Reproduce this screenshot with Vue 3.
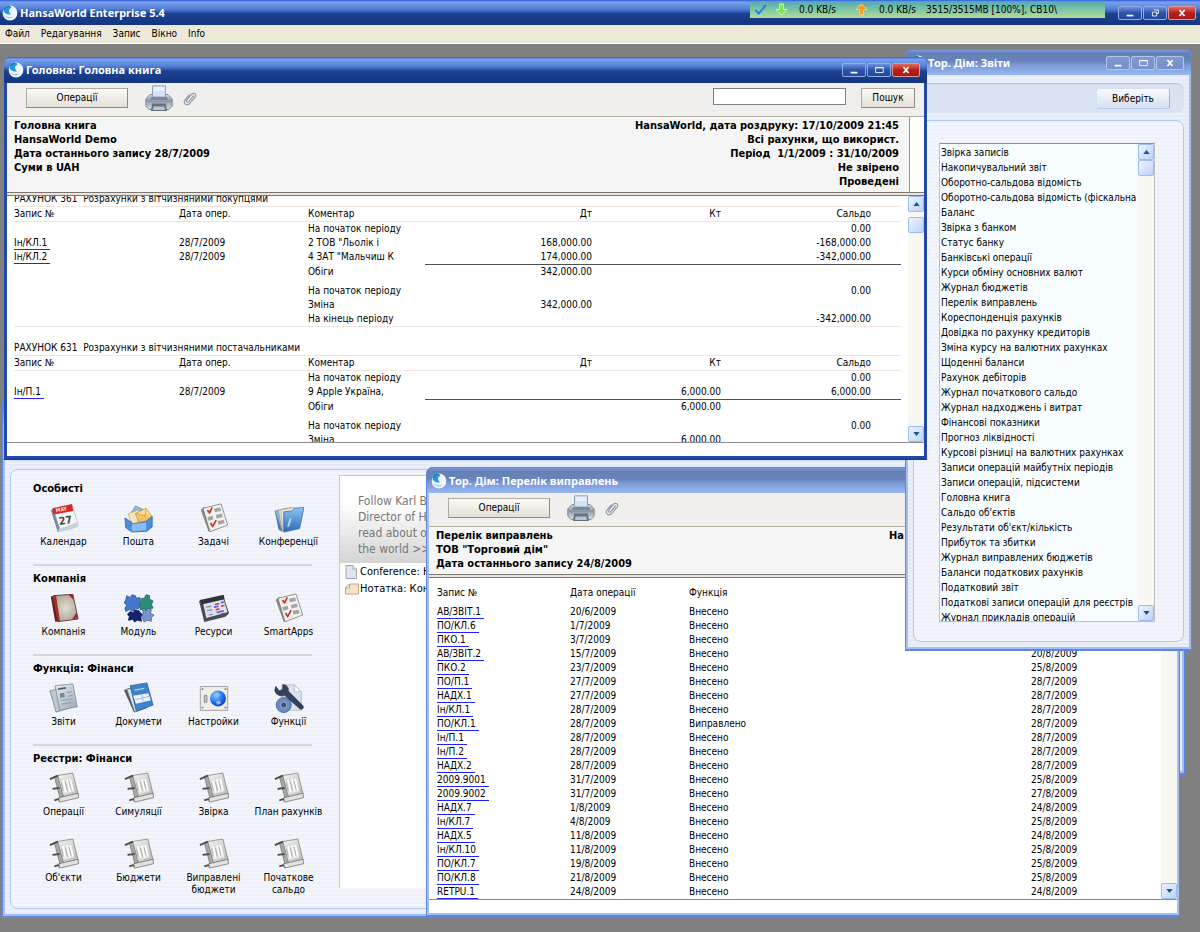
<template>
  <div class="app">
    <svg class="sprite" width="0" height="0" aria-hidden="true">
      <defs>
        <linearGradient id="g-blue" x1="0" y1="0" x2="0" y2="1">
          <stop offset="0" stop-color="#8fc4f0" />
          <stop offset="1" stop-color="#2c68b8" />
        </linearGradient>
        <linearGradient id="g-steel" x1="0" y1="0" x2="1" y2="1">
          <stop offset="0" stop-color="#e6ecf1" />
          <stop offset="1" stop-color="#9aa8b5" />
        </linearGradient>
        <linearGradient id="g-grey" x1="0" y1="0" x2="1" y2="1">
          <stop offset="0" stop-color="#f6f6f4" />
          <stop offset="1" stop-color="#b4b4b2" />
        </linearGradient>
        <linearGradient id="g-gold" x1="0" y1="0" x2="0" y2="1">
          <stop offset="0" stop-color="#fff0b0" />
          <stop offset="1" stop-color="#e8a832" />
        </linearGradient>
        <linearGradient id="g-printer" x1="0" y1="0" x2="0" y2="1">
          <stop offset="0" stop-color="#d4dde6" />
          <stop offset="0.45" stop-color="#8995a1" />
          <stop offset="0.6" stop-color="#a5b3bf" />
          <stop offset="1" stop-color="#d6e2ea" />
        </linearGradient>
        <radialGradient id="g-globe" cx="0.35" cy="0.3" r="0.8">
          <stop offset="0" stop-color="#8cc8ff" />
          <stop offset="0.6" stop-color="#1e6cf0" />
          <stop offset="1" stop-color="#0a2ea0" />
        </radialGradient>
        <radialGradient id="g-paper" cx="0.5" cy="0.5" r="0.7">
          <stop offset="0" stop-color="#e4dfd2" />
          <stop offset="1" stop-color="#9c9484" />
        </radialGradient>
      </defs>

      <symbol id="logo" viewBox="0 0 16 16">
        <circle cx="8" cy="8" r="7.4" fill="#eef6fc" />
        <path d="M1.500 6C2 2.500 5 .8 8 1c1.500.2 1.500 1.500.5 2.300C6.500 4.500 6.500 7 9 9.500 6 9.500 3 9 1.500 6z" fill="#1e9ad8" />
        <path d="M2.500 10c2 2.300 6 3 9 1.500-1.800 2.600-7 3-9-1.500z" fill="#8cc0e4" />
        <path d="M2.200 4.500C3 2.500 5 1.200 7 1.200" stroke="#0d5fae" fill="none" />
      </symbol>

      <symbol id="printer" viewBox="0 0 28 27">
        <path d="M5 9.500h18l4.200 4.500v7l-3.200 3.500H4L.8 21v-7z" fill="url(#g-printer)" stroke="#7f8c98" />
        <path d="M7.500 .8h13V12h-13z" fill="#d3e2f8" stroke="#8ea3be" />
        <path d="M6 12h16l1 3H5z" fill="#7c8996" />
        <path d="M9 2h10v4H9z" fill="#e9f1fc" />
        <path d="M7 18.500h14l1 7.500H6z" fill="#66737e" />
        <path d="M8.500 21.500h11L20 25H8z" fill="#b8c6d1" />
      </symbol>

      <symbol id="clip" viewBox="0 0 14 16">
        <path d="M10.500 5 5.700 10.600c-1.300 1.400-3-.2-1.900-1.600L8.400 3.400c2.200-2.400 5.600 0 3.700 2.700L6.800 12.400C4 15.400-.3 12.500 1.800 9.300L6.200 4" fill="none" stroke="#8f9aa7" stroke-width="1.200" stroke-linecap="round" />
      </symbol>

      <symbol id="mail" viewBox="0 0 34 34">
        <path d="M8 11 13 3l12 6-4 9z" fill="#8dbbe0" stroke="#5a8db8" stroke-width=".7" />
        <path d="M5 12 16 8l8 11-16 5z" fill="#f4e5b8" stroke="#b79a52" stroke-width=".7" />
        <path d="M13 12 25 6l7 10-14 9z" fill="url(#g-gold)" stroke="#b88420" stroke-width=".7" />
        <path d="M13 12 24 15l1-9" fill="none" stroke="#b88420" stroke-width=".7" />
        <path d="M1 17l8 5v2l16-3 7-6v12l-6 5-17 1-7-5z" fill="#4e8ddb" stroke="#2a5fae" stroke-width=".8" />
        <path d="M9 24l16-2v9l-16 1z" fill="#8cbcf4" />
      </symbol>

      <symbol id="tasks" viewBox="0 0 34 34">
        <path d="M2 8 6 4l8 26-3 3z" fill="#8a8a8a" />
        <path d="M4.500 6 25 1l7.500 24-20 7.500z" fill="#f2f2f0" stroke="#6d6d6d" stroke-width=".8" />
        <path d="M17 6.500l7-1.500 1 4-7 1.500zM19 13.500l7-1.500 1 4-7 1.500zM21 20.500l7-1.500 1 4-7 1.500zM9.500 16l6-1.500 1 4-6 1.500z" fill="#a4a4a4" />
        <path d="M8 8.500l6-1.500 1 4-6 1.500zM12 23l6-1.500 1 4-6 1.500z" fill="#dcdcdc" />
        <path d="M9.500 8l2.500 3 3-6M13 22.500l2.500 4 4-7" fill="none" stroke="#c8302c" stroke-width="1.800" />
      </symbol>

      <symbol id="folder" viewBox="0 0 34 34">
        <path d="M1 9 15 6l4 20-11 5z" fill="#8fb4d4" stroke="#4f7fae" stroke-width=".7" />
        <path d="M5 8l15-3 3 20-14 6z" fill="#d7e6c8" stroke="#8a9b94" stroke-width=".7" />
        <path d="M8 8l15-3 3 20-16 6z" fill="#f6eedd" stroke="#a49a80" stroke-width=".7" />
        <path d="M11 10l9-1 3-3 11-1-5 24-18 4z" fill="url(#g-blue)" stroke="#2d619c" stroke-width=".8" />
        <path d="M1 9l9 24-5-3z" fill="#4d7fb4" />
        <path d="M19 17l-3 10" stroke="#b8d8f4" stroke-width="2" />
      </symbol>

      <symbol id="book" viewBox="0 0 34 34">
        <path d="M2 4l5-1 5 29-5 .5z" fill="#6b1f1d" />
        <path d="M5 3l22-1.500 6 28-23 3z" fill="url(#g-paper)" stroke="#54352c" />
        <path d="M5 3h3l4.500 29-2.500.5z" fill="#a62c2c" />
        <path d="M22 2l5-.5 1.500 7zM33 29l-7 1 5-8z" fill="#a62c2c" />
      </symbol>

      <symbol id="puzzle" viewBox="0 0 34 34">
        <path d="M3 3l4 2 2-3 4 1 1 3 4-1 1 4-2 3 2 3-3 3-4-1-1 3-5-1-4 2-1-4 2-3-3-3 2-3z" fill="#4676cc" stroke="#234a92" stroke-width=".8" />
        <path d="M20 6l3 0 2-4 4 1v4l4 2-2 4 2 4-5 1-1 3-4-3-5 1 1-4-2-3 3-2z" fill="#2b8f74" stroke="#145a4c" stroke-width=".8" />
        <path d="M7 21l4 1 1-3 5 1 2 3 2 1-2 4 1 4-5-1-3 2-2-3-5 1 1-4-2-3z" fill="#10246e" stroke="#0a1648" stroke-width=".8" />
        <path d="M21 19l4 1 2-3 4 2-1 4 4 2-3 3v4l-5-1-3 2-2-4-2-2 3-3z" fill="#7894cc" stroke="#39588f" stroke-width=".8" />
      </symbol>

      <symbol id="planner" viewBox="0 0 34 34">
        <path d="M0 9 27 3l7 20-4 4-24 6z" fill="#4a4d58" />
        <path d="M4 11 28 6l5 16-25 7z" fill="#dfdfea" stroke="#333846" stroke-width=".8" />
        <path d="M1 8 28 2l1 5L3 13z" fill="#2e3340" />
        <path d="M8 16l6-1M9 20l6-1M11 25l5-1" stroke="#8893b0" stroke-width="1.500" />
        <path d="M18 13l5-1M25 15l4-1M19 19l4-1M25 24l3-1" stroke="#e03448" stroke-width="1.800" />
        <path d="M17 16l5-1M20 22l8-2M25 11l3-1" stroke="#3b60d8" stroke-width="1.800" />
      </symbol>

      <symbol id="report" viewBox="0 0 34 34">
        <path d="M1 9l16-5 7 24-16 5z" fill="#bcc8d1" stroke="#6b7985" stroke-width=".8" />
        <path d="M7 3l20-2 5 26-20 4z" fill="url(#g-steel)" stroke="#74828e" stroke-width=".8" />
        <path d="M10 7l9-1.500" stroke="#4d5a66" stroke-width="1.800" />
        <path d="M12 12l5-1 1 5-5 1z" fill="#788894" />
        <path d="M13 20l13-2M14 24l13-2M20 11l6-1M21 15l6-1" stroke="#8a98a4" />
      </symbol>

      <symbol id="documents" viewBox="0 0 34 34">
        <path d="M0 8 14 3l10 26-13 4z" fill="#4a5862" />
        <path d="M3 7 20 4l6 24-14 5z" fill="#d5dee6" stroke="#5a6772" stroke-width=".8" />
        <path d="M7 3l19-3 7 25-19 7z" fill="#3f84ca" stroke="#24548c" stroke-width=".8" />
        <path d="M10.500 14.500l17-3 3 8-17 4z" fill="#eef4fa" />
        <path d="M12 19l17-4M20 13l2 8" stroke="#9cb4ce" />
        <path d="M12 8l11-2" stroke="#b0d6f6" stroke-width="1.500" />
      </symbol>

      <symbol id="settings" viewBox="0 0 34 34">
        <path d="M1.500 4h31v27h-31z" fill="#eeeeea" stroke="#9a9a98" />
        <path d="M3 6h2v2H3zM29 6h2v2h-2zM3 27h2v2H3zM29 27h2v2h-2z" fill="#888" />
        <path d="M6 14h3v8H6z" fill="#c2c2c0" stroke="#777" stroke-width=".8" />
        <circle cx="21.500" cy="17.500" r="9" fill="url(#g-globe)" />
        <path d="M18 12c3-2 5 0 6 2l-4 3-3-2zM19 21l5-1 1 3-4 2z" fill="#7cc2fa" />
      </symbol>

      <symbol id="tools" viewBox="0 0 34 34">
        <path d="M9 2h14l8 8v21H9z" fill="#dce2ee" stroke="#b4bdce" />
        <path d="M23 2v8h8z" fill="#f6f8fc" stroke="#b4bdce" />
        <circle cx="11" cy="25" r="8.500" fill="#6b89be" stroke="#4a689c" />
        <circle cx="11" cy="25" r="3.500" fill="#3b4f78" stroke="#a8bbdc" />
        <path d="M2 4l4 5 4-2V2c4 0 7 3 6 7l16 16c3 3 0 6-3 4L12 14C6 16 1 12 1 8z" fill="#33445f" stroke="#1c2940" stroke-width=".8" />
      </symbol>

      <symbol id="register" viewBox="0 0 34 34">
        <path d="M9 3 27 0l6 24-17 5z" fill="url(#g-grey)" stroke="#777" stroke-width=".8" />
        <path d="M6 4l4-1 7 26-6 3 1-5z" fill="#a8a8a6" stroke="#666" stroke-width=".7" />
        <path d="M1 7l9-4M4 18l8-1M6 31l10-3" stroke="#4c4c4c" stroke-width="2" fill="none" />
        <path d="M11 28l22-5 .5 5L12 33z" fill="#e2e2e0" stroke="#666" stroke-width=".8" />
        <path d="M12 7l13-2 4 16-13 3z" fill="#dededc" />
        <path d="M16 8l3 14M20.500 7l3 14M24 7l3 13" stroke="#fff" stroke-width="2" />
        <path d="M14 11l2 9M18.500 10l2.500 10M22.500 9l2.500 10" stroke="#a0a09e" stroke-width=".9" />
      </symbol>
    </svg>

    <header class="titlebar titlebar--main">
      <svg class="titlebar__logo"><use href="#logo" /></svg>
      <h1 class="titlebar__text">HansaWorld Enterprise 5.4</h1>
      <div class="monitor">
        <svg viewBox="0 0 14 14"><path d="M1.500 7.500 5 11.500 13 2" fill="none" stroke="#1f7af0" stroke-width="2" /></svg>
        <svg viewBox="0 0 14 14"><path d="M5 1h4v6h4l-6 6-6-6h4z" fill="#7be04c" stroke="#d8f8c0" /></svg>
        <span class="monitor__rate">0.0 KB/s</span>
        <svg viewBox="0 0 14 14"><path d="M5 13h4V7h4L7 1 1 7h4z" fill="#ff9a1c" stroke="#ffd080" /></svg>
        <span class="monitor__rate">0.0 KB/s</span>
        <span>3515/3515MB [100%], CB10\</span>
      </div>
      <div class="controls">
        <button v-for="kind in ['min', 'restore', 'close']" :key="kind" :class="['control', 'control--' + kind]" :aria-label="kind">
          <svg viewBox="0 0 22 14"><path :d="glyphs[kind]" /></svg>
        </button>
      </div>
    </header>

    <nav class="menu">
      <button v-for="item in menu" :key="item" class="menu__item">{{ item }}</button>
    </nav>

    <main class="desktop">
      <!-- Navigation centre -->
      <section class="window window--inactive window--nav">
        <div class="titlebar"></div>
        <div class="pane">
          <div class="pane__bar"></div>
          <div class="pane__box pane__box--nav">
            <div class="launcher">
              <section v-for="group in groups" :key="group.title" class="group">
                <h2>{{ group.title }}</h2>
                <div class="group__grid">
                  <button v-for="item in group.items" :key="item.label" class="launch">
                    <svg v-if="item.icon === 'calendar'" viewBox="0 0 34 34">
                      <path d="M2 8 7 5l7 25-4 3z" fill="#6d8ba2" />
                      <path d="M5 7 26 2l7 22-20 8z" fill="#f5f5f3" stroke="#a5aeb5" stroke-width=".7" />
                      <path d="M10 30 31 22l3 4-6 3-16 4z" fill="#c4d1da" />
                      <path d="M4 6 26 1l1.500 8L5.500 13z" fill="#d7282a" />
                      <text x="8" y="10.500" font-size="6" font-weight="700" fill="#ffd8d0" transform="rotate(-9 8 10.500)">MAY</text>
                      <text x="12" y="25" font-size="12" font-weight="700" fill="#444" transform="rotate(-9 12 25)">27</text>
                    </svg>
                    <svg v-else><use :href="'#' + item.icon" /></svg>
                    <span>{{ item.label }}</span>
                  </button>
                </div>
              </section>
            </div>
            <div class="desk">
              <p class="desk__banner">Follow Karl B<br />Director of H<br />read about o<br />the world &gt;&gt;</p>
              <a href="#" class="desk__item">
                <svg viewBox="0 0 12 14"><path d="M1 .5h7L11.500 4v9.500H1z" fill="#dde6ee" stroke="#9aa6b2" /><path d="M8 .5V4h3.500" fill="#fff" stroke="#9aa6b2" /></svg>
                Conference: H
              </a>
              <a href="#" class="desk__item desk__item--note">
                <svg viewBox="0 0 14 12"><path d="M4.500 1h9v10H.5V5z" fill="#f6e2c8" stroke="#b8a890" /><path d="M4.500 1v4h-4z" fill="#fff" stroke="#b8a890" /></svg>
                Нотатка: Кон
              </a>
            </div>
          </div>
        </div>
      </section>

      <section class="window window--inactive window--back">
        <div class="titlebar"></div>
        <div class="pane"></div>
      </section>

      <!-- Journal -->
      <section class="window window--inactive window--journal">
        <div class="titlebar">
          <svg class="titlebar__logo"><use href="#logo" /></svg>
          <h2 class="titlebar__text">Тор. Дім: Перелік виправлень</h2>
        </div>
        <div class="toolbar">
          <button class="btn btn--wide">Операції</button>
          <button class="tool" aria-label="Друк"><svg class="tool__print"><use href="#printer" /></svg></button>
          <button class="tool" aria-label="Вкладення"><svg class="tool__clip"><use href="#clip" /></svg></button>
        </div>
        <div class="summary">
          <div class="summary__text summary__text--short">
            <p>Перелік виправлень<br />ТОВ "Торговий дім"<br />Дата останнього запису 24/8/2009</p>
            <p class="summary__source">Ha</p>
          </div>
        </div>
        <div class="view">
          <div class="view__body">
            <table class="journal">
              <thead>
                <tr><th>Запис №</th><th>Дата операції</th><th>Функція</th><th></th></tr>
              </thead>
              <tbody>
                <tr v-for="row in journal" :key="row[0]">
                  <td><a href="#">{{ row[0] }}</a></td>
                  <td>{{ row[1] }}</td>
                  <td>{{ row[2] }}</td>
                  <td>{{ row[3] }}</td>
                </tr>
              </tbody>
            </table>
          </div>
          <div class="scroll">
            <button class="scroll__btn" aria-label="Вгору"><svg viewBox="0 0 8 5"><path d="M4 0l4 5H0z" /></svg></button>
            <button class="scroll__btn" aria-label="Вниз"><svg viewBox="0 0 8 5"><path d="M0 0h8L4 5z" /></svg></button>
          </div>
        </div>
        <div class="status"></div>
      </section>

      <!-- Reports list -->
      <section class="window window--inactive window--reports">
        <div class="titlebar">
          <svg class="titlebar__logo"><use href="#logo" /></svg>
          <h2 class="titlebar__text">Тор. Дім: Звіти</h2>
          <div class="controls">
            <button v-for="kind in ['min', 'max', 'close']" :key="kind" :class="['control', 'control--' + kind]" :aria-label="kind">
              <svg viewBox="0 0 22 14"><path :d="glyphs[kind]" /></svg>
            </button>
          </div>
        </div>
        <div class="pane">
          <div class="pane__bar"><button class="btn btn--soft">Виберіть</button></div>
          <div class="pane__box pane__box--reports">
            <div class="listbox">
              <ul>
                <li v-for="name in reports" :key="name">{{ name }}</li>
              </ul>
              <div class="scroll">
                <button class="scroll__btn" aria-label="Вгору"><svg viewBox="0 0 8 5"><path d="M4 0l4 5H0z" /></svg></button>
                <div class="scroll__thumb"></div>
                <button class="scroll__btn" aria-label="Вниз"><svg viewBox="0 0 8 5"><path d="M0 0h8L4 5z" /></svg></button>
              </div>
            </div>
          </div>
        </div>
      </section>

      <!-- General ledger -->
      <section class="window window--ledger">
        <div class="titlebar">
          <svg class="titlebar__logo"><use href="#logo" /></svg>
          <h2 class="titlebar__text">Головна: Головна книга</h2>
          <div class="controls">
            <button v-for="kind in ['min', 'max', 'close']" :key="kind" :class="['control', 'control--' + kind]" :aria-label="kind">
              <svg viewBox="0 0 22 14"><path :d="glyphs[kind]" /></svg>
            </button>
          </div>
        </div>
        <div class="toolbar">
          <button class="btn btn--wide">Операції</button>
          <button class="tool" aria-label="Друк"><svg class="tool__print"><use href="#printer" /></svg></button>
          <button class="tool" aria-label="Вкладення"><svg class="tool__clip"><use href="#clip" /></svg></button>
          <input v-model="query" class="search" type="text" aria-label="Пошук" />
          <button class="btn">Пошук</button>
        </div>
        <div class="summary">
          <div class="summary__text">
            <p>Головна книга<br />HansaWorld Demo<br />Дата останнього запису 28/7/2009<br />Суми в UAH</p>
            <p class="summary__right">
              HansaWorld, дата роздруку: 17/10/2009 21:45<br />Всі рахунки, що використ.<br />Період&nbsp; 1/1/2009 : 31/10/2009<br />Не звірено<br />Проведені
            </p>
          </div>
        </div>
        <div class="view">
          <div class="view__body view__body--ledger">
            <table v-for="account in accounts" :key="account.title" class="ledger">
              <caption>{{ account.title }}</caption>
              <colgroup>
                <col class="c-no" /><col class="c-date" /><col class="c-note" /><col /><col class="c-kt" /><col class="c-sum" /><col class="c-end" />
              </colgroup>
              <thead>
                <tr>
                  <th>Запис №</th><th>Дата опер.</th><th>Коментар</th>
                  <th class="num">Дт</th><th class="num">Кт</th><th class="num">Сальдо</th><th></th>
                </tr>
              </thead>
              <tbody>
                <tr v-for="(row, i) in account.rows" :key="i" :class="row.kind">
                  <td><a v-if="row.no" href="#">{{ row.no }}</a></td>
                  <td>{{ row.date }}</td>
                  <td>{{ row.note }}</td>
                  <td class="num">{{ row.dt }}</td>
                  <td class="num">{{ row.kt }}</td>
                  <td class="num">{{ row.sum }}</td>
                  <td></td>
                </tr>
              </tbody>
            </table>
          </div>
          <div class="scroll">
            <button class="scroll__btn" aria-label="Вгору"><svg viewBox="0 0 8 5"><path d="M4 0l4 5H0z" /></svg></button>
            <div class="scroll__thumb scroll__thumb--low"></div>
            <button class="scroll__btn" aria-label="Вниз"><svg viewBox="0 0 8 5"><path d="M0 0h8L4 5z" /></svg></button>
          </div>
        </div>
        <div class="status"></div>
      </section>
    </main>
  </div>
</template>

<script setup>
import { ref } from 'vue'

const query = ref('')

const menu = ['Файл', 'Редагування', 'Запис', 'Вікно', 'Info']

const glyphs = {
  min: 'M7 10h8',
  max: 'M7 4h9v6H7zM7 4.500h9',
  restore: 'M10 3.500h5v4h-2M8 6h5v4.500H8z',
  close: 'M8 3.500l6 7M14 3.500l-6 7',
}

const groups = [
  {
    title: 'Особисті',
    items: [
      { icon: 'calendar', label: 'Календар' },
      { icon: 'mail', label: 'Пошта' },
      { icon: 'tasks', label: 'Задачі' },
      { icon: 'folder', label: 'Конференції' },
    ],
  },
  {
    title: 'Компанія',
    items: [
      { icon: 'book', label: 'Компанія' },
      { icon: 'puzzle', label: 'Модуль' },
      { icon: 'planner', label: 'Ресурси' },
      { icon: 'tasks', label: 'SmartApps' },
    ],
  },
  {
    title: 'Функція: Фінанси',
    items: [
      { icon: 'report', label: 'Звіти' },
      { icon: 'documents', label: 'Докумети' },
      { icon: 'settings', label: 'Настройки' },
      { icon: 'tools', label: 'Функції' },
    ],
  },
  {
    title: 'Реєстри: Фінанси',
    items: ['Операції', 'Симуляції', 'Звірка', 'План рахунків', "Об'єкти", 'Бюджети', 'Виправлені бюджети', 'Початкове сальдо']
      .map((label) => ({ icon: 'register', label })),
  },
]

const accounts = [
  {
    title: 'РАХУНОК 361\u00a0 Розрахунки з вітчизняними покупцями',
    rows: [
      { note: 'На початок періоду', sum: '0.00' },
      { no: 'Ін/КЛ.1', date: '28/7/2009', note: '2 ТОВ "Льолік і', dt: '168,000.00', sum: '-168,000.00' },
      { no: 'Ін/КЛ.2', date: '28/7/2009', note: '4 ЗАТ "Мальчиш К', dt: '174,000.00', sum: '-342,000.00' },
      { kind: 'total', note: 'Обіги', dt: '342,000.00' },
      { kind: 'spaced', note: 'На початок періоду', sum: '0.00' },
      { note: 'Зміна', dt: '342,000.00' },
      { note: 'На кінець періоду', sum: '-342,000.00' },
    ],
  },
  {
    title: 'РАХУНОК 631\u00a0 Розрахунки з вітчизняними постачальниками',
    rows: [
      { note: 'На початок періоду', sum: '0.00' },
      { no: 'Ін/П.1', date: '28/7/2009', note: '9 Apple Україна,', kt: '6,000.00', sum: '6,000.00' },
      { kind: 'total', note: 'Обіги', kt: '6,000.00' },
      { kind: 'spaced', note: 'На початок періоду', sum: '0.00' },
      { note: 'Зміна', kt: '6,000.00' },
    ],
  },
]

const journal = [
  ['АВ/ЗВІТ.1', '20/6/2009', 'Внесено', ''],
  ['ПО/КЛ.6', '1/7/2009', 'Внесено', ''],
  ['ПКО.1', '3/7/2009', 'Внесено', ''],
  ['АВ/ЗВІТ.2', '15/7/2009', 'Внесено', '20/8/2009'],
  ['ПКО.2', '23/7/2009', 'Внесено', '25/8/2009'],
  ['ПО/П.1', '27/7/2009', 'Внесено', '28/7/2009'],
  ['НАДХ.1', '27/7/2009', 'Внесено', '28/7/2009'],
  ['Ін/КЛ.1', '28/7/2009', 'Внесено', '28/7/2009'],
  ['ПО/КЛ.1', '28/7/2009', 'Виправлено', '28/7/2009'],
  ['Ін/П.1', '28/7/2009', 'Внесено', '28/7/2009'],
  ['Ін/П.2', '28/7/2009', 'Внесено', '28/7/2009'],
  ['НАДХ.2', '28/7/2009', 'Внесено', '28/7/2009'],
  ['2009.9001', '31/7/2009', 'Внесено', '25/8/2009'],
  ['2009.9002', '31/7/2009', 'Внесено', '27/8/2009'],
  ['НАДХ.7', '1/8/2009', 'Внесено', '24/8/2009'],
  ['Ін/КЛ.7', '4/8/2009', 'Внесено', '25/8/2009'],
  ['НАДХ.5', '11/8/2009', 'Внесено', '24/8/2009'],
  ['Ін/КЛ.10', '11/8/2009', 'Внесено', '25/8/2009'],
  ['ПО/КЛ.7', '19/8/2009', 'Внесено', '25/8/2009'],
  ['ПО/КЛ.8', '21/8/2009', 'Внесено', '25/8/2009'],
  ['RETPU.1', '24/8/2009', 'Внесено', '24/8/2009'],
]

const reports = [
  'Звірка записів',
  'Накопичувальний звіт',
  'Оборотно-сальдова відомість',
  'Оборотно-сальдова відомість (фіскальна',
  'Баланс',
  'Звірка з банком',
  'Статус банку',
  'Банківські операції',
  'Курси обміну основних валют',
  'Журнал бюджетів',
  'Перелік виправлень',
  'Кореспонденція рахунків',
  'Довідка по рахунку кредиторів',
  'Зміна курсу на валютних рахунках',
  'Щоденні баланси',
  'Рахунок дебіторів',
  'Журнал початкового сальдо',
  'Журнал надходжень і витрат',
  'Фінансові показники',
  'Прогноз ліквідності',
  'Курсові різниці на валютних рахунках',
  'Записи операцій майбутніх періодів',
  'Записи операцій, підсистеми',
  'Головна книга',
  "Сальдо об'єктів",
  "Результати об'єкт/кількість",
  'Прибуток та збитки',
  'Журнал виправлених бюджетів',
  'Баланси податкових рахунків',
  'Податковий звіт',
  'Податкові записи операцій для реєстрів',
  'Журнал прикладів операцій',
]
</script>

<style>
body { background: #808080; }
</style>

<style scoped>
.app {
  display: flex;
  flex-direction: column;
  min-height: 100vh;
  overflow: hidden;
  font-family: "DejaVu Sans Condensed", "DejaVu Sans", sans-serif;
  font-size: 10px;
  line-height: 14px;
  color: #000;
}

.sprite { position: absolute; }

button {
  font: inherit;
  color: inherit;
  padding: 0;
  border: none;
  background: none;
}

h1, h2, p, ul { margin: 0; padding: 0; }
svg { display: block; flex: none; }

/* Title bars */
.titlebar {
  display: flex;
  align-items: center;
  height: 26px;
  box-sizing: border-box;
  background: linear-gradient(#2a5ad8 0, #7ba0ec 8%, #5580d8 35%, #3860b8 46%, #1c4292 54%, #14357f 100%);
}

.titlebar--main { height: 25px; padding: 0 4px 0 2px; }
.titlebar__logo { width: 16px; height: 16px; }

.titlebar__text {
  margin-left: 2px;
  font-family: "Noto Sans", sans-serif;
  font-size: 11px;
  font-weight: 700;
  color: #fff;
}

.controls { display: flex; gap: 1px; margin-left: auto; }

.control {
  width: 24px;
  height: 14px;
  box-sizing: border-box;
  border: 1px solid #8facea;
  border-radius: 2px;
  background: linear-gradient(#6f93de, #2c52a8 50%, #2348a0);
}

.control svg { width: 22px; height: 12px; margin: 0 auto; }
.control path { fill: none; stroke: #fff; stroke-width: 2; }
.control--restore path, .control--max path { stroke-width: 1; }
.control--close { width: 28px; background: linear-gradient(#e8695c, #b41f1c 50%, #a81a18); border-color: #d89a9c; }

.monitor {
  display: flex;
  align-items: center;
  align-self: flex-start;
  width: 355px;
  height: 17px;
  margin: 1px 13px 0 auto;
  box-sizing: border-box;
  padding-left: 4px;
  gap: 8px;
  background: linear-gradient(#4fa8b4, #7cc4a4 50%, #b4dc98);
}

.monitor svg { width: 13px; height: 13px; }
.monitor__rate { width: 48px; margin-left: 3px; }
.monitor__rate:nth-of-type(2) { width: 39px; }
.titlebar--main .controls { margin-left: 0; }

/* Menu */
.menu {
  display: flex;
  gap: 11px;
  height: 18px;
  padding: 0 5px;
  background: #ece9d8;
  border-bottom: 1px solid #fff;
}

/* Windows */
.desktop { position: relative; flex: 1; }

.window {
  position: absolute;
  display: flex;
  flex-direction: column;
  box-sizing: border-box;
  padding: 0 3px 3px;
  border-radius: 7px 7px 0 0;
  overflow: hidden;
  background: #2249a8;
  border-bottom: 1px solid #12348c;
}

.window .titlebar { flex: none; margin: 0 -3px; padding: 0 7px 0 4px; }

.window--inactive { background: #a5beef; border-color: #5c86e0; box-shadow: inset 0 0 0 1px #5c86e0; }
.window--inactive .titlebar {
  border: 1px solid #5c86e0;
  border-bottom: none;
  border-radius: 7px 7px 0 0;
  background: linear-gradient(#7c9ce0 0, #6680b4 14%, #6884bc 45%, #7b9ad6 60%, #98b6f0 100%);
}
.window--inactive .control {
  border-color: #b2c6ee;
  background: linear-gradient(#8098cc, #7490cc);
}

.window--nav { left: 2px; top: 354px; width: 920px; height: 520px; }
.window--back { left: 500px; top: 460px; width: 685px; height: 271px; }
.window--journal { left: 426px; top: 423px; width: 754px; height: 450px; }
.window--reports { left: 905px; top: 5px; width: 287px; height: 602px; }
.window--ledger { left: 4px; top: 13px; width: 923px; height: 403px; }

.toolbar {
  display: flex;
  align-items: center;
  flex: none;
  height: 34px;
  padding: 0 9px 4px 19px;
  box-sizing: border-box;
  background: #f0efee;
  border-bottom: 1px solid #b4b0a0;
}

.btn {
  width: 54px;
  height: 20px;
  border: 1px solid #b0ab9c;
  border-right-color: #8f8b80;
  border-bottom-color: #8f8b80;
  background: linear-gradient(#faf9f6, #e4e0d6);
}

.btn--wide { width: 102px; }

.btn--soft {
  width: 74px;
  height: 21px;
  border-color: #d4e0f2 #98b8e4 #b0c8ec #d4e0f2;
  border-radius: 3px;
  background: linear-gradient(#fafbfe, #d4dff0);
}

.tool__print { width: 28px; height: 27px; margin: 2px 0 0 17px; }
.tool__clip { width: 14px; height: 16px; margin: 2px 0 0 10px; }

.search {
  width: 133px;
  height: 17px;
  box-sizing: border-box;
  margin: 0 15px 3px auto;
  border: 1px solid #808080;
  background: #fff;
  font: inherit;
}

.summary {
  flex: none;
  padding-right: 14px;
  background: #fff;
  border-bottom: 1px solid #7d776f;
}

.summary__text {
  display: flex;
  justify-content: space-between;
  padding: 2px 10px 3px 7px;
  height: 70px;
  border-right: 1px solid #909090;
  background: #f5f5f5;
  font-size: 11px;
  font-weight: 700;
  white-space: nowrap;
}

.summary__text--short { height: 42px; }
.summary__right { text-align: right; }
.summary__source { width: 263px; }

.view {
  display: flex;
  flex: 1;
  min-height: 0;
  margin-top: 2px;
  border-top: 1px solid #7d776f;
  border-bottom: 1px solid #8c8c8c;
  background: #fff;
  box-shadow: 0 -2px #ece4dc;
}

.view__body { flex: 1; min-width: 0; padding: 0 7px 0 8px; overflow: hidden; }
.view__body--ledger { padding-left: 7px; }
.status { flex: none; height: 13px; background: #fff; }

table { width: 100%; table-layout: fixed; border-spacing: 0; border-collapse: separate; }
th, td { height: 14px; padding: 0; text-align: left; font-weight: 400; white-space: nowrap; }
td a, .desk__item { color: #000; text-decoration: none; }

td a {
  display: block;
  width: fit-content;
  height: 12px;
  line-height: 12px;
  padding-right: 3px;
  border-bottom: 1px solid #2020ff;
}

.ledger { margin-bottom: 14px; border-bottom: 1px solid #eee4e0; }
.ledger:first-child { margin-top: -4px; }
.ledger caption { text-align: left; white-space: nowrap; }
.ledger th { border: 1px solid #eee4e0; border-width: 1px 0; }
.ledger .num { text-align: right; }
.ledger .total td { border-top: 1px solid transparent; }
.ledger .total td:nth-child(n + 4) { border-top-color: #505050; }
.ledger .spaced td { padding-top: 5px; }
.c-no { width: 165px; }
.c-date { width: 129px; }
.c-note { width: 117px; }
.c-kt { width: 129px; }
.c-sum { width: 150px; }
.c-end { width: 30px; }

.journal th { height: 18px; padding: 8px 0 1px; vertical-align: top; }
.journal th:nth-child(1) { width: 133px; }
.journal th:nth-child(2) { width: 119px; }
.journal th:nth-child(3) { width: 342px; }

/* Scrollbars */
.scroll { display: flex; flex-direction: column; flex: none; width: 16px; background: #f8f7f2; }

.scroll__btn, .scroll__thumb {
  display: flex;
  align-items: center;
  justify-content: center;
  width: 16px;
  height: 16px;
  box-sizing: border-box;
  border: 1px solid #98bcf4;
  border-radius: 2px;
  background: linear-gradient(135deg, #eef4ff, #bcd2f8);
}

.scroll__btn:last-child { margin-top: auto; }
.scroll__btn svg { width: 7px; height: 4px; fill: #1c5098; }
.scroll__thumb--low { margin-top: 5px; }

/* Pane with striped background */
.pane {
  display: flex;
  flex-direction: column;
  flex: 1;
  min-height: 0;
  padding: 8px 5px 5px;
  background: repeating-linear-gradient(#e4eaf7 0 2px, #eaeff9 2px 4px);
}

.pane__bar {
  display: flex;
  align-items: center;
  justify-content: flex-end;
  flex: none;
  height: 30px;
  box-sizing: border-box;
  padding-right: 14px;
  border-top: 1px solid #a8c2ea;
  border-radius: 8px;
  background: #d8e2f1;
}

.pane__box {
  display: flex;
  flex: 1;
  min-height: 0;
  margin-top: 7px;
  border: 1px solid #b0caec;
  border-radius: 8px;
  background: repeating-linear-gradient(#eef1f9 0 2px, #f3f5fb 2px 4px);
}

.pane__box--nav { padding: 5px 0 20px; }
.pane__box--reports { padding: 22px 28px 19px 25px; }

.listbox {
  display: flex;
  flex: 1;
  min-width: 0;
  border: 1px solid #c0c0c0;
  border-top-color: #909090;
  background: #f6fcff;
}

.listbox ul {
  flex: 1;
  min-width: 0;
  padding: 1px 0 0 1px;
  overflow: hidden;
  list-style: none;
  line-height: 15px;
  white-space: nowrap;
}

/* Launcher */
.launcher { flex: none; width: 328px; padding: 1px 27px 0 22px; box-sizing: border-box; }
.group { height: 90px; box-sizing: border-box; padding-top: 6px; border-bottom: 2px solid #d4d6dc; }
.group:last-child { height: auto; border-bottom: none; }
.group h2 { font-size: 11px; line-height: 14px; }
.group__grid { display: grid; grid-template-columns: repeat(4, 75px); row-gap: 19px; margin: 5px 0 0 -7px; }
.launch { display: flex; flex-direction: column; align-items: center; justify-content: flex-start; line-height: 12px; }
.launch svg { width: 30px; height: 34px; }
.launch span { margin-top: 1px; padding: 0 2px; }

.desk { flex: 1; border: 1px solid #c8c8c8; border-width: 1px 0 0 1px; background: #fff; }

.desk__banner {
  height: 87px;
  box-sizing: border-box;
  padding: 17px 18px 0;
  font-size: 12px;
  line-height: 16px;
  color: #777;
  background: linear-gradient(#fff 30%, #d4d4d4);
}

.desk__item { display: flex; align-items: center; gap: 3px; height: 17px; padding-left: 5px; font-size: 11px; }
.desk__item svg { width: 12px; height: 14px; }
.desk__item--note { gap: 1px; }
.desk__item--note svg { width: 14px; height: 12px; }
</style>
